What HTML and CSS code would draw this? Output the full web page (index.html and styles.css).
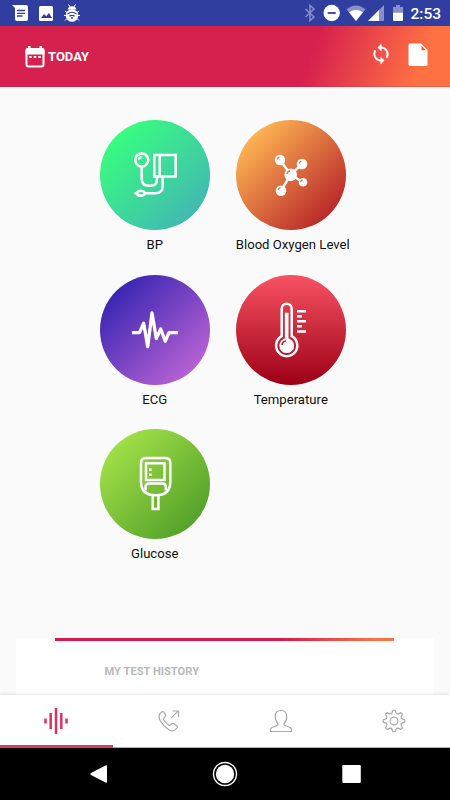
FILE: index.html
```html
<!DOCTYPE html>
<html lang="en">
<head>
    <meta charset="UTF-8">
    <meta name="viewport" content="width=device-width, initial-scale=1.0">
    <title>Today</title>
    <link rel="stylesheet" href="styles.css">
</head>
<body>
    <div class="status-bar">
        <svg width="90" height="26" viewBox="0 0 90 26" fill="#fff">
            <path d="M12 5h14q2 0 2 2v12q0 2-2 2H17q-2 0-2-2V8z"/>
            <path d="M17 10.500h8M17 13.300h8M17 16h5.500" stroke="#303f9f" stroke-width="1.300"/>
            <rect x="39" y="6" width="14" height="15" rx="1.500"/>
            <path d="M41 18l3-4 2.200 2.300 2.800-3.300 3 5z" fill="#303f9f"/>
            <path d="M68.500 4.500l2 3M75.500 4.500l-2 3M65 11l2 1.500M79 11l-2 1.500M64 15.500h16M65 20.500l2-2M79 20.500l-2-2" stroke="#fff" stroke-width="1"/>
            <path d="M67.500 9.500q1-3.300 4.500-3.300t4.500 3.300z"/>
            <ellipse cx="72" cy="15.500" rx="6.300" ry="6.300"/>
            <path d="M67.500 14q4.500-3.500 9 0M69.300 16.300q2.700-2 5.400 0" stroke="#303f9f" stroke-width="1.200" fill="none"/>
            <circle cx="72" cy="18" r="1" fill="#303f9f"/>
        </svg>
        <div class="status-right">
            <svg width="104" height="26" viewBox="304 0 104 26" fill="#fff">
                <path d="M305.500 9l8.500 8-4 3.500v-15l4 3.500-8.500 8" fill="none" stroke="#8790c9" stroke-width="1.500"/>
                <circle cx="331.700" cy="13" r="8.200"/>
                <path d="M327.700 13h8" stroke="#303f9f" stroke-width="1.800"/>
                <path d="M346.500 9.500Q356 1.500 365.500 9.500L356 21z" fill="#8790c9"/>
                <path d="M349.200 12.300q6.800-5 13.600 0L356 21z"/>
                <path d="M384 5v16h-16z" fill="#8790c9"/>
                <path d="M379 10v11h-11z"/>
                <path d="M396 5h4v2h3v6h-10V7h3z" fill="#8790c9"/>
                <path d="M393 12.700h10V20q0 1-1 1h-8q-1 0-1-1z"/>
            </svg>
            <span class="clock">2:53</span>
        </div>
    </div>

    <header class="app-header">
        <div class="header-date">
            <svg width="20" height="23" viewBox="0 0 20 23">
                <path d="M1.500 6h17v13.500q0 2-2 2h-13q-2 0-2-2z" fill="none" stroke="#fff" stroke-width="2"/>
                <path d="M.5 9.500V5q0-2 2-2H3V1h2.500v2h9V1H17v2h.5q2 0 2 2v4.500z" fill="#fff"/>
                <path d="M4.200 12h2.500M8.700 12h2.500M13.200 12h2.500" stroke="#fff" stroke-width="2"/>
            </svg>
            <span>TODAY</span>
        </div>
        <div class="header-actions">
            <svg width="18" height="22" viewBox="0 0 18 22" fill="none" stroke="#fff" stroke-width="1.900">
                <path d="M9 4.500a6.700 6.700 0 0 1 5.600 10.300M9 17.500A6.700 6.700 0 0 1 3.400 7.200"/>
                <path d="M9.500 .5v8L5.500 4.500zM8.500 13.500v8l4-4z" fill="#fff" stroke="none"/>
            </svg>
            <svg width="20" height="24" viewBox="0 0 20 24">
                <path d="M2 .5h11l6.500 6.500v14.500q0 1.500-1.500 1.500H2Q.5 23 .5 21.500V2Q.5 .5 2 .5z" fill="#fff"/>
                <path d="M13.500 2.700v4.500H18z" fill="#f4622f"/>
            </svg>
        </div>
    </header>

    <main class="content">
        <div class="test-grid">
            <div class="test">
                <div class="test-icon bp">
                    <svg viewBox="0 0 110 110">
                        <circle cx="41.700" cy="40" r="6.500"/>
                        <path d="M39 39.500q.3-2 2.500-2.500M41.700 47v12q0 6.700 7 6.700h2q6.300 0 6.300-6.500V57"/>
                        <path d="M54.300 35h21.400v21.400H54.300zM59.700 35v21.400M62.700 57v9q0 7.300-7.500 7.300H45.500"/>
                        <path d="M34.500 73.300h2q1.500-2.500 4.300-2.500t4.500 2.500q-1.500 2.500-4.500 2.500t-4.300-2.500z"/>
                    </svg>
                </div>
                <div class="test-name">BP</div>
            </div>
            <div class="test">
                <div class="test-icon oxygen">
                    <svg viewBox="0 0 110 110">
                        <path d="M44 40l10.700 14.700L66 44M45 70.700l9.700-16L67 62.300"/>
                        <g fill="#fff" stroke="none">
                            <circle cx="44" cy="40" r="5.200"/>
                            <circle cx="66" cy="44" r="5.300"/>
                            <circle cx="54.700" cy="54.700" r="6.300"/>
                            <circle cx="45" cy="70.700" r="5.300"/>
                            <circle cx="67" cy="62.300" r="4.300"/>
                        </g>
                        <path class="shine" d="M41.300 39.500q.2-2 2.200-2.300M63.300 43.500q.2-2 2.200-2.300M51 54q.3-2.700 3-3M42.300 70q.2-2 2.200-2.300M64.700 61.800q.2-1.500 1.800-1.800"/>
                    </svg>
                </div>
                <div class="test-name">Blood Oxygen Level</div>
            </div>
            <div class="test">
                <div class="test-icon ecg">
                    <svg viewBox="0 0 110 110">
                        <path d="M32 57.700h7.500l4.200-9.500 4 23.500L52 38l4.300 25.500 4.400-9.500 4.600 12.200 3.700-8.500h9" stroke-width="3.300" stroke-linejoin="round"/>
                    </svg>
                </div>
                <div class="test-name">ECG</div>
            </div>
            <div class="test">
                <div class="test-icon temperature">
                    <svg viewBox="0 0 110 110">
                        <path d="M45.700 61.200V33.700a5 5 0 0 1 10 0v27.500a10.600 10.600 0 1 1-10 0z"/>
                        <path d="M50.700 37.700V66" stroke-width="3.700"/>
                        <circle cx="50.700" cy="70.700" r="7.400" fill="#fff" stroke="none"/>
                        <path d="M46 70q.4-3.500 4-4" stroke="#c2132d" stroke-width="1.600"/>
                        <path d="M61 36.300h9M61 41.300h5M61 46.300h9M61 51.300h5M61 56.600h9"/>
                    </svg>
                </div>
                <div class="test-name">Temperature</div>
            </div>
            <div class="test">
                <div class="test-icon glucose">
                    <svg viewBox="0 0 110 110">
                        <path d="M46 29h19.300q5 0 5 5v19q0 13.300-14.600 13.300T41 53V34q0-5 5-5z"/>
                        <path d="M46 34.200h18.500v16.800H46zM45.500 61.500V58q0-3.500 3.500-3.500h13.500q3.300 0 3.300 3.500v3.500"/>
                        <path d="M52.700 66.500V80h5.700V66.500"/>
                        <path d="M49 40.700h2.700M49 45.700h2.700" stroke-width="2.600"/>
                    </svg>
                </div>
                <div class="test-name">Glucose</div>
            </div>
        </div>

        <section class="history">
            <div class="history-line"></div>
            <h2>MY TEST HISTORY</h2>
        </section>
    </main>

    <nav class="tab-bar">
        <div class="tab active">
            <svg width="26" height="28" viewBox="0 0 26 28">
                <path d="M2.500 11.500v5M7.700 6v16M13 1v26M18.300 6v16M23.500 11.500v5"/>
            </svg>
        </div>
        <div class="tab">
            <svg width="22" height="22" viewBox="0 0 22 22">
                <path d="M4 1.700q-5 3.300-1.500 9.300 3 5.500 8 8.500 5.500 3.500 8.700-2 .4-1.200-.8-2l-3-2q-1.200-.6-2 .3l-1.200 1.500q-.8.5-1.800-.3-3-2.200-4.600-5-.5-1 .2-1.700L7.200 6.500q.8-.8.2-1.900L6 2.200Q5.300 1.200 4 1.700z"/>
                <path d="M13 8.200l7-7M14.500 1h6v6"/>
            </svg>
        </div>
        <div class="tab">
            <svg width="24" height="24" viewBox="0 0 24 24">
                <path d="M9 14.500Q6.300 12 6.300 7.500 6.300 1.500 12 1.500t5.700 6Q17.700 12 15 14.500q-.3 1.500 1 2l5 2q1.500.6 1.500 2.300V22.500h-21v-1.700q0-1.700 1.500-2.300l5-2q1.300-.5 1-2z"/>
            </svg>
        </div>
        <div class="tab">
            <svg width="24" height="24" viewBox="0 0 24 24">
                <circle cx="12" cy="12" r="3.900"/>
                <path id="gear"/>
            </svg>
        </div>
    </nav>

    <div class="system-nav">
        <svg viewBox="0 0 450 52" width="450" height="52" fill="#fff">
            <path d="M105.500 17.500q1.500-.8 1.500.8v15.400q0 1.600-1.500.8L91 27q-1.500-1 0-2z"/>
            <circle cx="225" cy="26" r="11.500" fill="none" stroke="#fff" stroke-width="1.400"/>
            <circle cx="225" cy="26" r="9.200"/>
            <rect x="342.300" y="17" width="18.500" height="18" rx="1.200"/>
        </svg>
    </div>

    <script>
        // Build the settings gear outline: eight teeth with rounded gaps
        function point(degrees, radius) {
            const angle = degrees * Math.PI / 180;
            return (12 + radius * Math.sin(angle)).toFixed(2) + ' ' + (12 - radius * Math.cos(angle)).toFixed(2);
        }

        let path = 'M' + point(-6, 10.8);
        for (let i = 0; i < 8; i++) {
            const a = i * 45;
            path += 'L' + point(a + 6, 10.8) + 'L' + point(a + 12, 8.8);
            path += 'Q' + point(a + 22.5, 6.8) + ' ' + point(a + 33, 8.8) + 'L' + point(a + 39, 10.8);
        }
        document.getElementById('gear').setAttribute('d', path + 'Z');
    </script>
</body>
</html>
```
FILE: styles.css
```css
* {
    box-sizing: border-box;
}
body {
    margin: 0;
    width: 450px;
    height: 800px;
    display: flex;
    flex-direction: column;
    overflow: hidden;
    font-family: Roboto, sans-serif;
    background: #fafafa;
    color: #111;
}
svg {
    display: block;
    flex-shrink: 0;
}
.status-bar {
    height: 26px;
    flex-shrink: 0;
    display: flex;
    justify-content: space-between;
    background: #303f9f;
}
.status-right {
    display: flex;
    padding-right: 9px;
}
.clock {
    width: 33px;
    line-height: 28px;
    font-size: 15.500px;
    font-weight: 500;
    color: #fff;
    white-space: nowrap;
    display: flex;
    justify-content: flex-end;
}
.app-header {
    height: 61px;
    flex-shrink: 0;
    display: flex;
    justify-content: space-between;
    padding: 0 22px 0 25px;
    color: #fff;
    background: linear-gradient(110deg, #d6204e 68%, #ff7043 92%);
    background-origin: border-box;
    border-bottom: 1px solid #d81b4540;
}
.header-date {
    display: flex;
    align-items: center;
    gap: 3px;
    font-size: 13px;
    font-weight: 700;
}
.header-date span {
    padding-top: 1px;
}
.header-actions {
    display: flex;
    gap: 18px;
    padding-top: 17px;
}
.content {
    flex: 1;
    display: flex;
    flex-direction: column;
    overflow: hidden;
}
.test-grid {
    display: grid;
    grid-template-columns: 110px 110px;
    column-gap: 26px;
    grid-auto-rows: 154.700px;
    justify-content: center;
    height: 551px;
    padding: 33px 4.500px 0 0;
}
.test-icon {
    width: 110px;
    height: 110px;
    border-radius: 50%;
}
.test-icon svg {
    fill: none;
    stroke: #fff;
    stroke-width: 2.500;
}
.bp {
    background: linear-gradient(135deg, #38ff7e 12%, #43b5b5 90%);
}
.oxygen {
    background: linear-gradient(135deg, #ffb854 12%, #b82429 88%);
}
.oxygen .shine {
    stroke: #dc7640;
    stroke-width: 1.300;
}
.ecg {
    background: linear-gradient(135deg, #3b27b3 15%, #bb63d4 88%);
}
.temperature {
    background: linear-gradient(180deg, #f85363, #9d0016);
}
.glucose {
    background: linear-gradient(135deg, #a2e148 12%, #52a029 88%);
}
.test-name {
    margin-top: 7px;
    font-size: 13.150px;
    line-height: 16px;
    text-align: center;
    white-space: nowrap;
}
.history {
    flex: 1;
    margin: 0 16px;
    background: #fff;
}
.history-line {
    height: 3px;
    margin: 0 40px 0 39px;
    background: linear-gradient(90deg, #d8174d 66%, #ff7043 94%);
}
.history h2 {
    margin: 23px 0 0 88.500px;
    font-size: 11.150px;
    line-height: 16px;
    font-weight: 700;
    color: #b9b9b9;
}
.tab-bar {
    height: 53px;
    flex-shrink: 0;
    display: flex;
    position: relative;
    background: #fff;
    box-shadow: 0 -1px 3px rgba(0, 0, 0, 0.1);
}
.tab {
    flex: 1;
    display: flex;
    align-items: center;
    justify-content: center;
    border-bottom: 1px solid #b5b5b5;
}
.tab svg {
    fill: none;
    stroke: #a9a9a9;
    stroke-width: 1.200;
    stroke-linejoin: round;
}
.tab.active {
    border-bottom: 3px solid #e0386c;
}
.tab.active svg {
    stroke: #dc3163;
    stroke-width: 2.500;
    margin-top: 2px;
}
.system-nav {
    height: 52px;
    flex-shrink: 0;
    background: #000;
}
```
